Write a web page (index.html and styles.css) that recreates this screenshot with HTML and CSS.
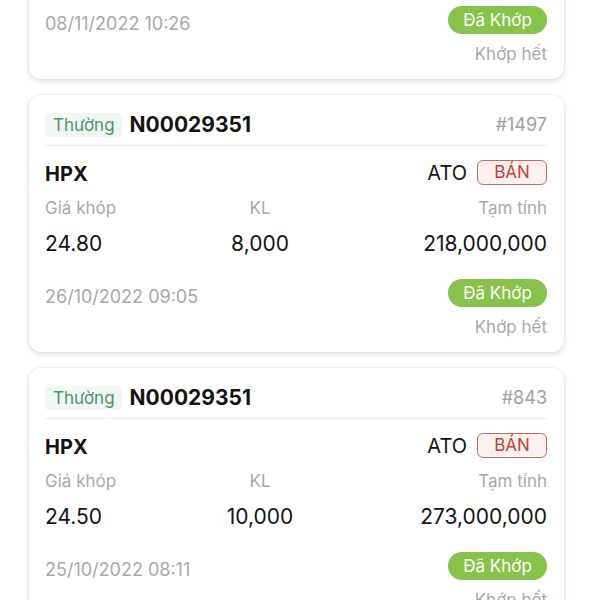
FILE: index.html
```html
<html>
  <head>
    <title>Lenh da khop</title>
    <meta charset="utf-8">
    <link rel="stylesheet" href="styles.css">
  </head>
  <body>
    <div class="list">

      <!-- previous order, scrolled up so only its bottom shows -->
      <div class="card cut">
        <div class="foot">
          <span class="date">08/11/2022 10:26</span>
          <span class="pill">Đã Khớp</span>
        </div>
        <div class="note">Khớp hết</div>
      </div>

      <div class="card">
        <div class="head">
          <span class="tag">Thường</span>
          <span class="code">N00029351</span>
          <span class="num">#1497</span>
        </div>
        <div class="symrow">
          <span class="sym">HPX</span>
          <span class="side">ATO <span class="ban">BÁN</span></span>
        </div>
        <div class="grid">
          <span class="lbl">Giá khóp</span>
          <span class="lbl mid">KL</span>
          <span class="lbl right">Tạm tính</span>
          <span class="val">24.80</span>
          <span class="val mid">8,000</span>
          <span class="val right">218,000,000</span>
        </div>
        <div class="foot">
          <span class="date">26/10/2022 09:05</span>
          <span class="pill">Đã Khớp</span>
        </div>
        <div class="note">Khớp hết</div>
      </div>

      <div class="card">
        <div class="head">
          <span class="tag">Thường</span>
          <span class="code">N00029351</span>
          <span class="num">#843</span>
        </div>
        <div class="symrow">
          <span class="sym">HPX</span>
          <span class="side">ATO <span class="ban">BÁN</span></span>
        </div>
        <div class="grid">
          <span class="lbl">Giá khóp</span>
          <span class="lbl mid">KL</span>
          <span class="lbl right">Tạm tính</span>
          <span class="val">24.50</span>
          <span class="val mid">10,000</span>
          <span class="val right">273,000,000</span>
        </div>
        <div class="foot">
          <span class="date">25/10/2022 08:11</span>
          <span class="pill">Đã Khớp</span>
        </div>
        <div class="note">Khớp hết</div>
      </div>

    </div>
  </body>
</html>
```

FILE: styles.css
```css
body {
  margin: 0;
  background: #ffffff;
  font-family: "Inter", "Roboto", sans-serif;
  color: #141414;
  overflow: hidden;
}
.list {
  padding: 0 36px 0 29px;
  display: flex;
  flex-direction: column;
  gap: 16px;
}
.card {
  background: #fff;
  border-radius: 12px;
  box-shadow: 0 2px 6px rgba(0, 0, 0, 0.13), 0 0 0 1px rgba(0, 0, 0, 0.04);
  padding: 17px 17px 15px 16px;
}
/* top of this card is scrolled out of view */
.card.cut {
  margin-top: -40px;
  padding-top: 46px;
}
.head {
  display: flex;
  align-items: center;
  padding-bottom: 8px;
  border-bottom: 1px solid #ececec;
}
.tag {
  height: 24px;
  line-height: 24px;
  padding: 0 7px 0 8px;
  font-size: 17px;
  color: #47966a;
  background: #f0f7f3;
  border-radius: 4px;
}
.code {
  margin-left: 8px;
  font-size: 21px;
  font-weight: 700;
}
.num {
  margin-left: auto;
  font-size: 18px;
  color: #a0a0a0;
}
.symrow {
  margin-top: 14px;
  display: flex;
  align-items: center;
  justify-content: space-between;
  height: 25px;
}
.sym {
  font-size: 20px;
  font-weight: 700;
  padding-top: 3px;
}
.side {
  display: flex;
  align-items: center;
  font-size: 20px;
  gap: 10px;
}
.ban {
  box-sizing: border-box;
  width: 70px;
  height: 25px;
  line-height: 22px;
  text-align: center;
  font-size: 17px;
  color: #b5473f;
  background: #fdf0ef;
  border: 1.5px solid #c56763;
  border-radius: 6px;
}
.grid {
  margin-top: 13px;
  display: grid;
  grid-template-columns: 150px 130px 1fr;
  row-gap: 13px;
}
.lbl {
  font-size: 17px;
  line-height: 20px;
  color: #a8a8a8;
}
.val {
  font-size: 21px;
  line-height: 26px;
}
.mid {
  text-align: center;
}
.right {
  text-align: right;
}
.foot {
  margin-top: 22px;
  display: flex;
  justify-content: space-between;
  align-items: center;
  height: 28px;
}
.card.cut .foot {
  margin-top: 0;
}
.date {
  font-size: 18px;
  color: #a8a8a8;
  padding-top: 7px;
}
.pill {
  width: 99px;
  height: 28px;
  line-height: 28px;
  text-align: center;
  border-radius: 14px;
  background: #87c24b;
  color: #fff;
  font-size: 17px;
}
.note {
  margin-top: 10px;
  text-align: right;
  font-size: 17px;
  line-height: 20px;
  color: #a8a8a8;
}
```
